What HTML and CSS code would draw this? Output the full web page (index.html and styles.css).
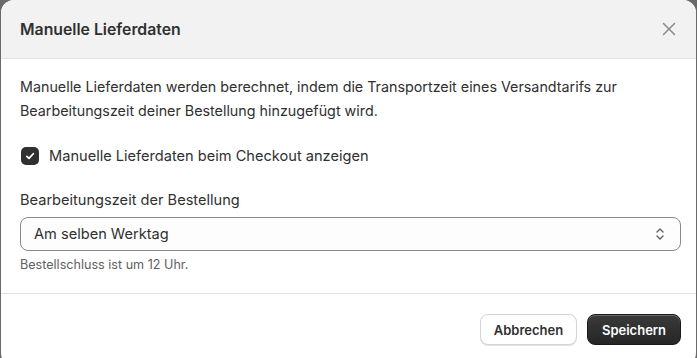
FILE: index.html
```html
<!DOCTYPE html>
<html lang="de">
<head>
<meta charset="utf-8">
<title>Manuelle Lieferdaten</title>
<link rel="stylesheet" href="styles.css">
</head>
<body>
<div class="dialog">
  <header class="dialog-header">
    <h2 class="dialog-title">Manuelle Lieferdaten</h2>
    <button class="close-btn" aria-label="Schließen">
      <svg width="14" height="14" viewBox="0 0 14 14"><path d="M1.5 1.5 12.5 12.5M12.5 1.5 1.5 12.5" stroke="#8a8a8a" stroke-width="1.5" stroke-linecap="round" fill="none"/></svg>
    </button>
  </header>
  <section class="dialog-body">
    <p class="intro">Manuelle Lieferdaten werden berechnet, indem die Transportzeit eines Versandtarifs zur Bearbeitungszeit deiner Bestellung hinzugefügt wird.</p>
    <label class="check-row">
      <span class="checkbox">
        <svg width="12" height="12" viewBox="0 0 12 12"><path d="M2.8 6.3 5 8.4 9.3 3.7" stroke="#fff" stroke-width="1.7" stroke-linecap="round" stroke-linejoin="round" fill="none"/></svg>
      </span>
      <span>Manuelle Lieferdaten beim Checkout anzeigen</span>
    </label>
    <div class="field">
      <div class="field-label">Bearbeitungszeit der Bestellung</div>
      <div class="select">
        <span>Am selben Werktag</span>
        <svg width="12" height="16" viewBox="0 0 12 16"><path d="M3 6 6 3 9 6M3 10 6 13 9 10" stroke="#616161" stroke-width="1.4" stroke-linecap="round" stroke-linejoin="round" fill="none"/></svg>
      </div>
      <div class="help">Bestellschluss ist um 12 Uhr.</div>
    </div>
  </section>
  <footer class="dialog-footer">
    <button class="btn btn-secondary">Abbrechen</button>
    <button class="btn btn-primary">Speichern</button>
  </footer>
</div>
</body>
</html>
```
FILE: styles.css
```css
* { box-sizing: border-box; }
html, body { margin: 0; padding: 0; }
body {
  background: #6a6a6a;
  font-family: Inter, "Liberation Sans", sans-serif;
  color: #303030;
  height: 358px;
  overflow: hidden;
}
.dialog {
  margin-left: 1px;
  width: 695px;
  height: 366px;
  background: #fff;
  border-radius: 13px;
  overflow: hidden;
  display: flex;
  flex-direction: column;
}
.dialog-header {
  height: 59px;
  background: #f2f2f2;
  border-bottom: 1px solid #e3e3e3;
  display: flex;
  align-items: center;
  justify-content: space-between;
  padding: 0 19px 0 19px;
}
.dialog-title {
  margin: 0;
  font-size: 15.8px;
  font-weight: 600;
  color: #303030;
}
.close-btn {
  background: none;
  border: 0;
  padding: 0;
  width: 16px;
  height: 16px;
  display: flex;
  align-items: center;
  justify-content: center;
}
.dialog-body {
  padding: 16px 15px 0 19px;
  border-bottom: 1px solid #e3e3e3;
  height: 235px;
}
.intro {
  margin: 0;
  font-size: 14.3px;
  line-height: 24px;
  color: #303030;
}
.check-row {
  display: flex;
  align-items: center;
  gap: 10px;
  margin-top: 23px;
  font-size: 14.6px;
  line-height: 20px;
}
.checkbox {
  width: 18px;
  height: 18px;
  border-radius: 5px;
  background: #303030;
  display: flex;
  align-items: center;
  justify-content: center;
  margin-left: 1px;
}
.field { margin-top: 24px; }
.field-label {
  font-size: 14.6px;
  line-height: 20px;
  margin-bottom: 7px;
}
.select {
  height: 34px;
  border: 1px solid #8a8a8a;
  border-radius: 8px;
  background: #fdfdfd;
  display: flex;
  align-items: center;
  justify-content: space-between;
  padding: 0 14px 0 13px;
  font-size: 14.6px;
}
.help {
  margin-top: 5px;
  font-size: 12.6px;
  line-height: 18px;
  color: #616161;
}
.dialog-footer {
  display: flex;
  justify-content: flex-end;
  gap: 10px;
  padding: 20px 15px 0 0;
}
.btn {
  height: 31px;
  border-radius: 8px;
  font-family: Inter, "Liberation Sans", sans-serif;
  font-size: 13px;
  font-weight: 600;
  padding: 0 12px;
}
.btn-secondary {
  background: #fff;
  color: #303030;
  border: 1px solid #d4d4d4;
  box-shadow: 0 1px 0 #e3e3e3;
  width: 97px;
}
.btn-primary {
  background: linear-gradient(#3a3a3a, #262626);
  color: #fff;
  border: 1px solid #1a1a1a;
  box-shadow: inset 0 1px 0 rgba(255,255,255,0.25);
  width: 94px;
}
```
